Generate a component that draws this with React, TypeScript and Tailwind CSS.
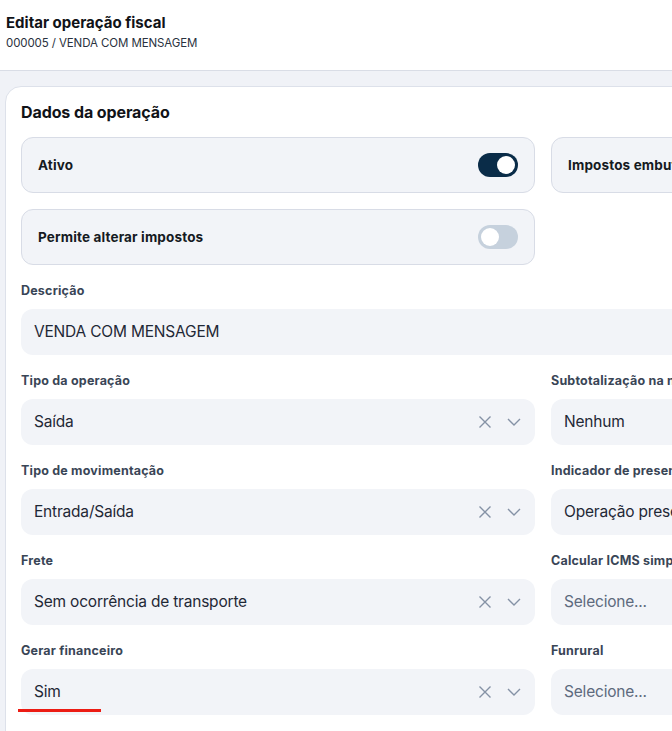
import React from 'react'

type Field = {
  label: string
  value?: string
  placeholder?: string
  clearable?: boolean
}

const leftFields: Field[] = [
  { label: 'Tipo da operação', value: 'Saída', clearable: true },
  { label: 'Tipo de movimentação', value: 'Entrada/Saída', clearable: true },
  { label: 'Frete', value: 'Sem ocorrência de transporte', clearable: true },
  { label: 'Gerar financeiro', value: 'Sim', clearable: true },
]

const rightFields: Field[] = [
  { label: 'Subtotalização na nota', value: 'Nenhum' },
  { label: 'Indicador de presença', value: 'Operação presencial' },
  { label: 'Calcular ICMS simples nacional', placeholder: 'Selecione...' },
  { label: 'Funrural', placeholder: 'Selecione...' },
]

function Toggle({ on }: { on: boolean }) {
  return (
    <span
      className={`flex h-6 w-10 items-center rounded-full px-[3px] ${
        on ? 'justify-end bg-[#0a2c48]' : 'justify-start bg-[#c6d1dd]'
      }`}
    >
      <span className="h-[18px] w-[18px] rounded-full bg-white" />
    </span>
  )
}

function ToggleCard({ label, on }: { label: string; on?: boolean }) {
  return (
    <div className="flex h-14 w-[514px] items-center justify-between rounded-xl border border-[#d8dce6] bg-[#f2f4f8] pl-4 pr-4">
      <span className="text-[13.5px] font-bold tracking-[0.15px] text-[#151a22]">{label}</span>
      {on !== undefined && <Toggle on={on} />}
    </div>
  )
}

function ClearIcon() {
  return (
    <svg width="14" height="14" viewBox="0 0 14 14" fill="none" stroke="#8592a6" strokeWidth="1.4">
      <path d="M1.5 1.5l11 11M12.5 1.5l-11 11" />
    </svg>
  )
}

function ChevronIcon() {
  return (
    <svg width="14" height="8" viewBox="0 0 14 8" fill="none" stroke="#8592a6" strokeWidth="1.4">
      <path d="M1 1l6 6 6-6" />
    </svg>
  )
}

function Label({ children }: { children: React.ReactNode }) {
  return (
    <div className="mb-[10px] h-4 text-[12.5px] font-bold leading-4 tracking-[0.2px] text-[#394556]">
      {children}
    </div>
  )
}

function SelectField({ field, underline }: { field: Field; underline?: boolean }) {
  return (
    <div className="w-[514px]">
      <Label>{field.label}</Label>
      <div className="relative flex h-[46px] items-center rounded-xl bg-[#f2f4f8] pl-[13px] pr-[14px]">
        <span
          className={`flex-1 truncate text-[15.5px] tracking-[-0.2px] ${
            field.value ? 'text-[#1f2836]' : 'text-[#5d6a7d]'
          }`}
        >
          {field.value ?? field.placeholder}
        </span>
        {field.clearable && (
          <div className="flex items-center gap-[15px]">
            <ClearIcon />
            <ChevronIcon />
          </div>
        )}
        {underline && (
          <span className="absolute bottom-[3px] left-[-3px] h-[3px] w-[83px] bg-[#ec1c14]" />
        )}
      </div>
    </div>
  )
}

export default function App() {
  return (
    <div
      className="h-[731px] w-[672px] overflow-hidden bg-[#f0f2f7]"
      style={{ fontFamily: 'Inter, "Noto Sans", sans-serif' }}
    >
      <header className="h-[71px] border-b border-[#d9dde6] bg-white pl-[6px] pt-[13px]">
        <h1 className="text-[15px] font-bold leading-5 text-[#111318]">Editar operação fiscal</h1>
        <p className="mt-[2px] text-[11.5px] leading-4 tracking-[-0.1px] text-[#2a3240]">
          000005 / VENDA COM MENSAGEM
        </p>
      </header>

      <div className="pl-[5px] pt-[15px]">
        <section className="w-[1120px] rounded-tl-2xl border border-[#dde1ea] bg-white pb-10 pl-[15px] pt-[13px]">
          <h2 className="text-[16px] font-bold leading-6 tracking-[-0.1px] text-[#111318]">
            Dados da operação
          </h2>

          <div className="mt-[13px] grid grid-cols-[514px_514px] gap-4">
            <ToggleCard label="Ativo" on />
            <ToggleCard label="Impostos embutidos no preço" on={false} />
            <ToggleCard label="Permite alterar impostos" on={false} />
          </div>

          <div className="mt-[18px]">
            <Label>Descrição</Label>
            <div className="flex h-[46px] w-[1044px] items-center rounded-xl bg-[#f2f4f8] pl-[13px] text-[15.5px] tracking-[-0.2px] text-[#1f2836]">
              VENDA COM MENSAGEM
            </div>
          </div>

          <div className="mt-[18px] grid grid-cols-[514px_514px] gap-x-4 gap-y-[18px]">
            {leftFields.map((f, i) => (
              <React.Fragment key={f.label}>
                <SelectField field={f} underline={i === leftFields.length - 1} />
                <SelectField field={rightFields[i]} />
              </React.Fragment>
            ))}
          </div>
        </section>
      </div>
    </div>
  )
}
